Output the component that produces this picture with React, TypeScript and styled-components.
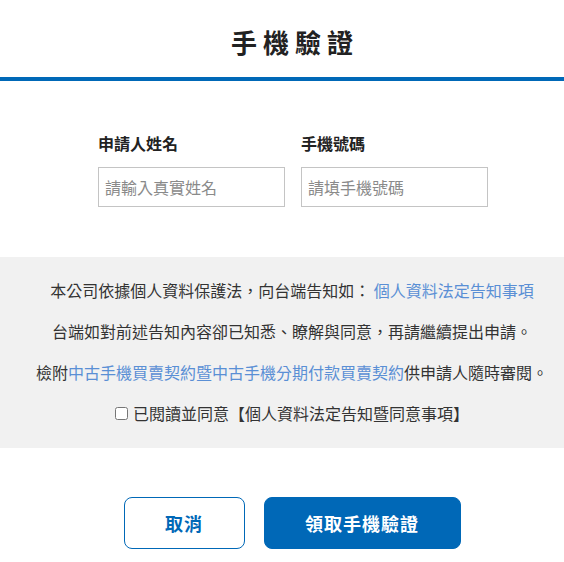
import styled, { createGlobalStyle } from "styled-components";

const GlobalStyle = createGlobalStyle`
  body {
    margin: 0;
    background: #fff;
    font-family: "Noto Sans CJK TC", "Noto Sans", sans-serif;
    color: #333;
  }
`;

const Page = styled.div`
  width: 564px;
  min-height: 562px;
  background: #fff;
`;

// centred blocks sit a little right of the viewport middle
const Header = styled.header`
  height: 77px;
  display: flex;
  align-items: center;
  justify-content: center;
  padding-left: 20px;
  border-bottom: 4px solid #0068b7;
`;

const Title = styled.h1`
  margin: 0 0 0 6px;
  font-size: 26px;
  font-weight: 700;
  letter-spacing: 6px;
  color: #222;
  line-height: 1;
  padding-top: 6px;
`;

const Form = styled.div`
  display: flex;
  gap: 16px;
  padding: 51px 0 50px 98px;
`;

const Field = styled.div`
  display: flex;
  flex-direction: column;
  gap: 13px;
`;

const Label = styled.label`
  font-size: 16px;
  font-weight: 700;
  line-height: 22px;
  color: #222;
`;

const Input = styled.input`
  box-sizing: border-box;
  width: 187px;
  height: 40px;
  border: 1px solid #c4c4c4;
  padding: 0 6px;
  font-family: inherit;
  font-size: 16px;
  color: #333;
  outline: none;
  &::placeholder {
    color: #8a8a8a;
  }
`;

const Notice = styled.section`
  background: #f1f1f1;
  padding: 13px 0 14px 20px;
  text-align: center;
`;

const Line = styled.p`
  margin: 0;
  font-size: 16px;
  line-height: 41px;
  color: #333;
  white-space: nowrap;
`;

const Link = styled.a`
  color: #5a8fd5;
  text-decoration: none;
`;

const Agree = styled.label`
  display: inline-flex;
  align-items: center;
  gap: 5px;
`;

const Check = styled.input`
  width: 13px;
  height: 13px;
  margin: 0;
`;

const Actions = styled.div`
  display: flex;
  justify-content: center;
  gap: 19px;
  padding: 49px 0 12px 20px;
`;

const Button = styled.button<{ $primary?: boolean }>`
  box-sizing: border-box;
  width: ${(p) => (p.$primary ? "197px" : "121px")};
  height: 52px;
  border-radius: 8px;
  border: 1px solid #0068b7;
  background: ${(p) => (p.$primary ? "#0068b7" : "#fff")};
  color: ${(p) => (p.$primary ? "#fff" : "#0068b7")};
  font-family: inherit;
  font-size: 18px;
  font-weight: 700;
  letter-spacing: 1px;
  cursor: pointer;
`;

export default function App() {
  return (
    <Page>
      <GlobalStyle />
      <Header>
        <Title>手機驗證</Title>
      </Header>
      <Form>
        <Field>
          <Label>申請人姓名</Label>
          <Input placeholder="請輸入真實姓名" />
        </Field>
        <Field>
          <Label>手機號碼</Label>
          <Input placeholder="請填手機號碼" />
        </Field>
      </Form>
      <Notice>
        <Line>
          本公司依據個人資料保護法，向台端告知如： <Link href="#">個人資料法定告知事項</Link>
        </Line>
        <Line>台端如對前述告知內容卻已知悉、瞭解與同意，再請繼續提出申請。</Line>
        <Line>
          檢附<Link href="#">中古手機買賣契約暨中古手機分期付款買賣契約</Link>供申請人隨時審閱。
        </Line>
        <Line>
          <Agree>
            <Check type="checkbox" />
            已閱讀並同意【個人資料法定告知暨同意事項】
          </Agree>
        </Line>
      </Notice>
      <Actions>
        <Button>取消</Button>
        <Button $primary>領取手機驗證</Button>
      </Actions>
    </Page>
  );
}
